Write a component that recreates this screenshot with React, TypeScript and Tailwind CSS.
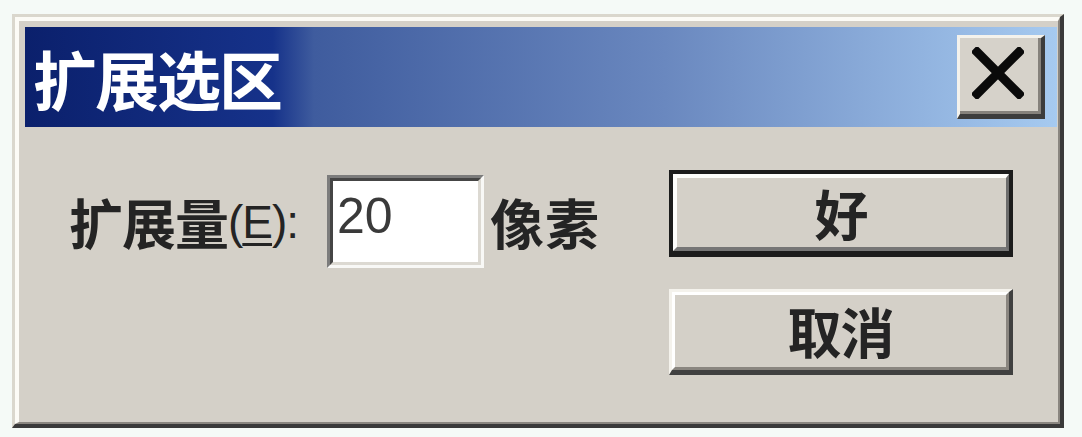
const cjk = { fontFamily: '"Noto Sans CJK SC", "Liberation Sans", sans-serif' };
const latin = { fontFamily: '"Liberation Sans", "Noto Sans CJK SC", sans-serif' };

const CloseButton = () => (
  <div className="w-[88px] h-[84px] border-t-[3px] border-l-[3px] border-r-[4px] border-b-[5px] border-t-[#f4f2ec] border-l-[#f4f2ec] border-r-[#3c3c3c] border-b-[#3c3c3c]">
    <div className="w-full h-full flex items-center justify-center bg-[#d6d2ca] border-r-[3px] border-b-[3px] border-r-[#86827c] border-b-[#86827c] pb-[4px] pr-[2px]">
      <svg width="52" height="52" viewBox="0 0 52 52">
        <path d="M5 5 L47 47 M47 5 L5 47" stroke="#0a0a0a" strokeWidth="9" strokeLinecap="square" />
      </svg>
    </div>
  </div>
);

const App = () => {
  return (
    <div className="w-[1082px] h-[437px] bg-[#f5faf7] pl-[12px] pt-[14px]">
      {/* Dialog frame */}
      <div className="w-[1052px] h-[414px] flex border-t-[3px] border-l-[3px] border-r-[4px] border-b-[4px] border-t-[#dad7cd] border-l-[#dad7cd] border-r-[#3a3a3a] border-b-[#3a3a3a]">
        <div className="flex-1 flex flex-col bg-[#d4d0c8] border-t-[4px] border-l-[4px] border-r-[2px] border-b-[2px] border-t-[#fcfbf6] border-l-[#fcfbf6] border-r-[#8a8680] border-b-[#8a8680] pt-[6px] pl-[6px] pr-[1px]">
          {/* Title bar */}
          <div className="h-[100px] flex items-center justify-between bg-[linear-gradient(to_right,#0b206c_0%,#16328a_24%,#3f5c9e_28%,#6a88bf_62%,#a6caf0_100%)] pl-[8px] pr-[12px]">
            <span className="text-white font-bold text-[64px] leading-none tracking-[-2px]" style={cjk}>
              扩展选区
            </span>
            <CloseButton />
          </div>

          {/* Body */}
          <div className="flex-1 flex items-start pl-[44px] pt-[43px] pr-[44px]">
            <div className="mt-[5px] h-[93px] flex items-center">
              <span className="w-[258px] text-[54px] leading-none font-bold text-[#242424] tracking-[-1px] flex items-center" style={cjk}>
                扩展量
                <span className="text-[46px] font-normal" style={latin}>
                  (<span className="underline underline-offset-[5px] decoration-[3px]">E</span>):
                </span>
              </span>
              <div className="w-[157px] h-[93px] border-t-[3px] border-l-[3px] border-b-[3px] border-r-[3px] border-t-[#7c7c7c] border-l-[#7c7c7c] border-b-[#f8f8f6] border-r-[#f8f8f6]">
                <div className="w-full h-full bg-white border-t-[3px] border-l-[3px] border-b-[3px] border-r-[3px] border-t-[#454545] border-l-[#454545] border-b-[#dcd9d2] border-r-[#dcd9d2] pl-[4px] pt-[10px]">
                  <span className="text-[50px] leading-none text-[#3a3a3a]" style={latin}>
                    20
                  </span>
                </div>
              </div>
              <span className="ml-[6px] text-[54px] leading-none font-bold text-[#242424] tracking-[1px]" style={cjk}>
                像素
              </span>
            </div>

            <div className="ml-auto flex flex-col gap-[32px]">
              {/* OK (default) */}
              <div className="w-[344px] h-[87px] border-[4px] border-b-[6px] border-[#1c1c1c]">
                <div className="w-full h-full flex items-center justify-center bg-[#d4d0c8] border-t-[4px] border-l-[4px] border-r-[3px] border-b-[4px] border-t-[#fdfdfb] border-l-[#fdfdfb] border-r-[#6c6c6c] border-b-[#767676]">
                  <span className="text-[54px] leading-none font-bold text-[#242424]" style={cjk}>
                    好
                  </span>
                </div>
              </div>
              {/* Cancel */}
              <div className="w-[344px] h-[86px] border-t-[3px] border-l-[3px] border-r-[4px] border-b-[5px] border-t-[#f4f2ec] border-l-[#f4f2ec] border-r-[#404040] border-b-[#404040]">
                <div className="w-full h-full flex items-center justify-center bg-[#d4d0c8] border-t-[3px] border-l-[3px] border-r-[3px] border-b-[3px] border-t-[#ffffff] border-l-[#ffffff] border-r-[#8a8680] border-b-[#8a8680]">
                  <span className="text-[54px] leading-none font-bold text-[#242424] tracking-[-1px]" style={cjk}>
                    取消
                  </span>
                </div>
              </div>
            </div>
          </div>
        </div>
      </div>
    </div>
  );
};

export default App;
